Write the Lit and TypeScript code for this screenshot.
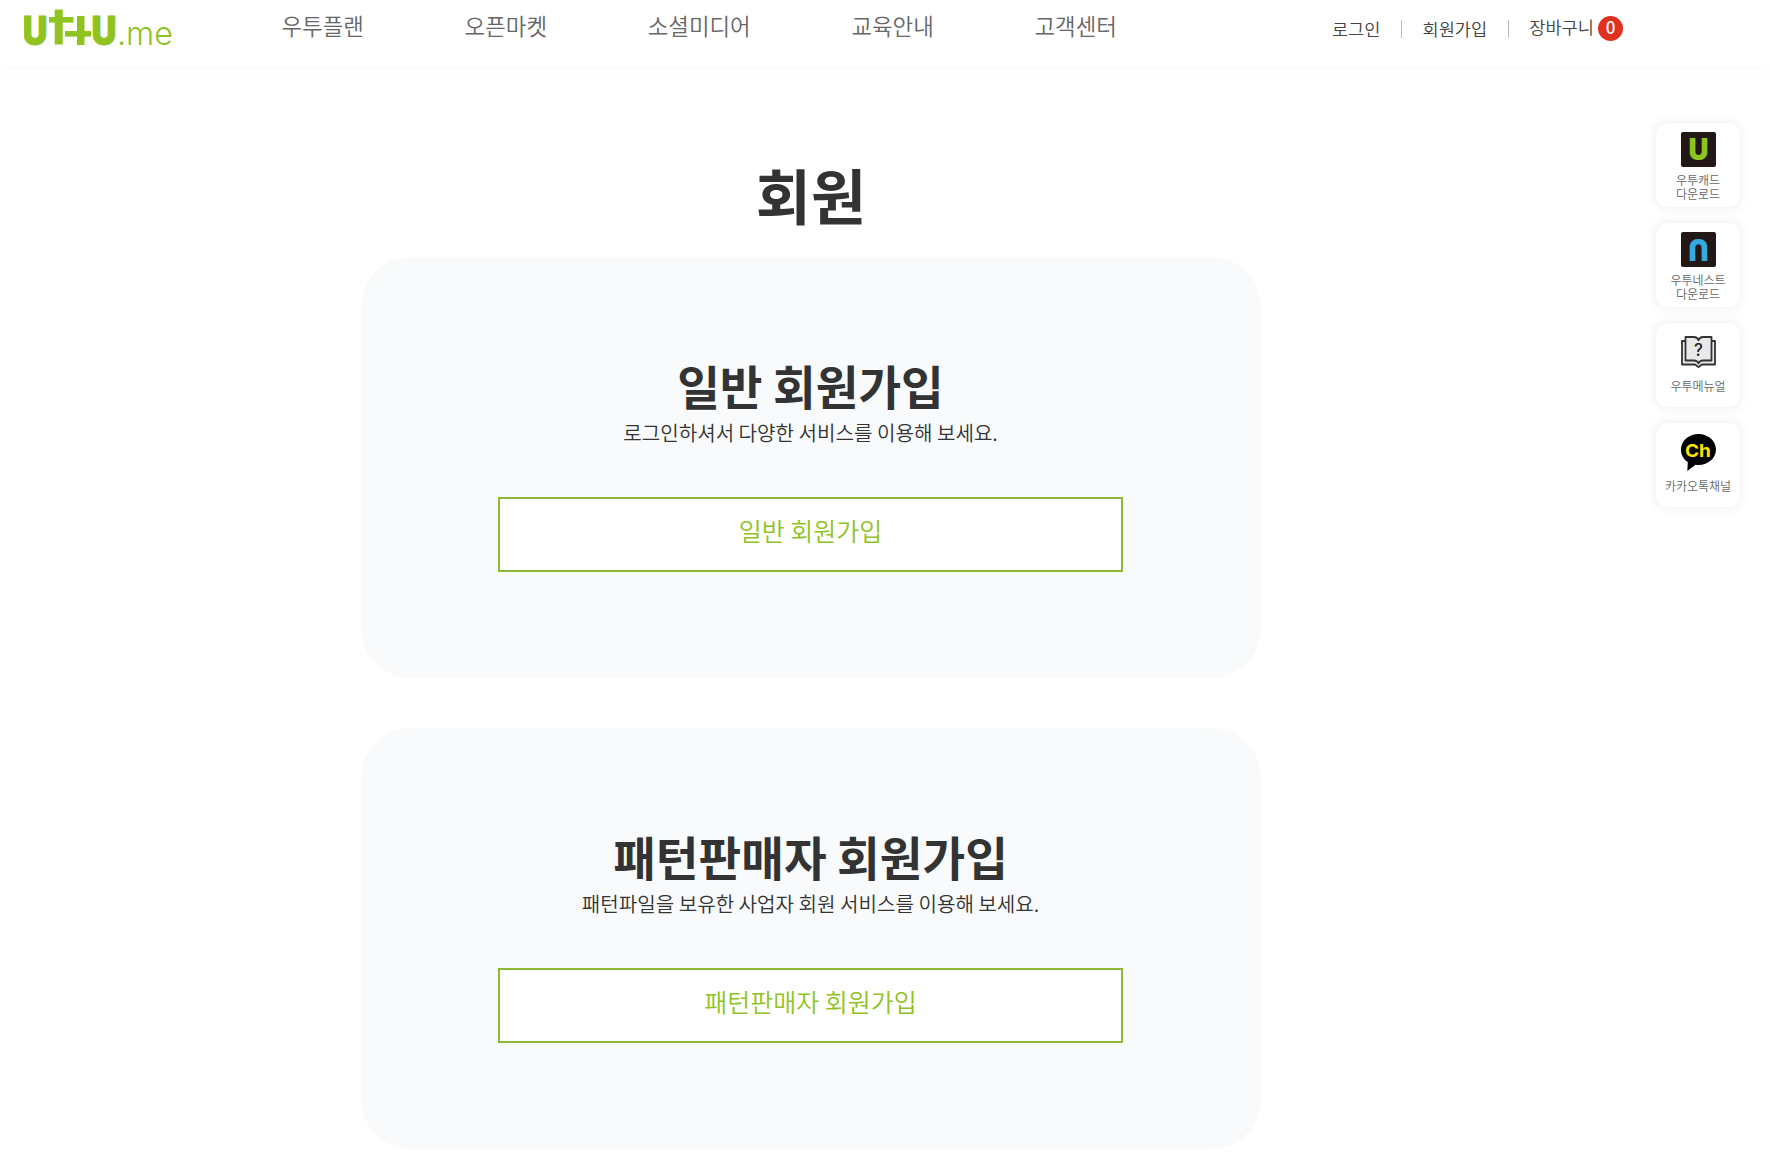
// src/app.ts
import { LitElement, html, css, svg } from 'lit';
import { customElement, property } from 'lit/decorators.js';

const NAV_ITEMS = ['우투플랜', '오픈마켓', '소셜미디어', '교육안내', '고객센터'];

const JOIN_CARDS = [
  {
    title: '일반 회원가입',
    description: '로그인하셔서 다양한 서비스를 이용해 보세요.',
    action: '일반 회원가입',
  },
  {
    title: '패턴판매자 회원가입',
    description: '패턴파일을 보유한 사업자 회원 서비스를 이용해 보세요.',
    action: '패턴판매자 회원가입',
  },
];

const QUICK_LINKS = [
  { icon: 'cad', lines: ['우투캐드', '다운로드'] },
  { icon: 'nest', lines: ['우투네스트', '다운로드'] },
  { icon: 'manual', lines: ['우투메뉴얼'] },
  { icon: 'channel', lines: ['카카오톡채널'] },
];

const ICONS: Record<string, unknown> = {
  cad: svg`
    <rect width="35" height="35" rx="2" fill="#231816" />
    <text class="mark" x="7.5" y="28" font-size="30" textLength="20" lengthAdjust="spacingAndGlyphs"
      fill="#8fc31f">U</text>
  `,
  nest: svg`
    <rect width="35" height="35" rx="2" fill="#231816" />
    <text class="mark" x="7.5" y="28" font-size="30" textLength="20" lengthAdjust="spacingAndGlyphs"
      fill="#36a9e1" transform="rotate(180 17.5 17.5)">U</text>
  `,
  manual: svg`
    <g fill="#e9e9e9" stroke="#333" stroke-width="1.8" stroke-linejoin="round">
      <path d="M4.5 7H1v23.500h12.500c2 0 2.500 2.500 4 2.500s2-2.500 4-2.500H34V7h-3.500" />
      <path d="M4.5 3h8.500c2.200 0 3.800 1.300 4.500 3.300.7-2 2.300-3.300 4.500-3.300h8.500v23.500H22c-2.200 0-3.800 1.200-4.500 3-.7-1.800-2.300-3-4.500-3H4.500z" />
    </g>
    <text class="question" x="17.5" y="21.5" text-anchor="middle">?</text>
  `,
  channel: svg`
    <path d="M17.5 0C7.800 0 0 7 0 15.500c0 5.500 2.600 9.800 6.800 12.500L6.300 37l8.200-6.300c1 .2 2 .3 3 .3C27.200 31 35 24 35 15.500S27.200 0 17.500 0z" />
    <text class="channel" x="17" y="22.5" text-anchor="middle" textLength="26"
      lengthAdjust="spacingAndGlyphs">Ch</text>
  `,
};

@customElement('site-header')
class SiteHeader extends LitElement {
  static styles = css`
    :host {
      display: block;
      height: 66px;
      background: #fff;
      box-shadow: 0 0 20px 10px rgba(0, 0, 0, 0.015);
    }
    .bar {
      display: flex;
      box-sizing: border-box;
      width: 1623px;
      height: 56px;
      padding-left: 24px;
    }
    .logo {
      display: block;
      width: 150px;
      height: 56px;
      margin-right: 107.5px;
      fill: #8fc31f;
    }
    .logo .letter {
      font: 900 40px Inter, sans-serif;
      stroke: #8fc31f;
      stroke-width: 0.8px;
    }
    .logo .suffix {
      font: 300 33px Inter, sans-serif;
    }
    nav {
      display: flex;
      gap: 100.7px;
      font-size: 22.4px;
      line-height: 51px;
      color: #666;
    }
    .account {
      display: flex;
      align-items: center;
      height: 57px;
      margin-left: auto;
      font-size: 17.6px;
      line-height: 25px;
      color: #444;
    }
    .divider {
      width: 1px;
      height: 18px;
      margin: 0 20.5px;
      background: #bbb;
    }
    .cart {
      display: flex;
      align-items: center;
      gap: 4px;
    }
    .cart span {
      margin-top: -4px;
    }
    .badge {
      width: 25px;
      height: 25px;
      border-radius: 50%;
      background: #e0301e;
      color: #fff;
      font: 500 17px/21px 'Noto Sans CJK KR', sans-serif;
      text-align: center;
    }
  `;

  @property({ type: Number })
  cartCount = 0;

  render() {
    return html`
      <div class="bar">
        <svg class="logo" viewBox="24 0 150 56">
          <text class="letter" x="22.5" y="44.5" textLength="25" lengthAdjust="spacingAndGlyphs">U</text>
          <rect x="54.7" y="9.5" width="8" height="35" />
          <rect x="49" y="17" width="24.5" height="5.6" />
          <rect x="77" y="16" width="7.5" height="29" />
          <rect x="65" y="31" width="26" height="5.6" />
          <text class="letter" x="91.5" y="44.5" textLength="25" lengthAdjust="spacingAndGlyphs">U</text>
          <text class="suffix" x="117" y="44.5" textLength="56" lengthAdjust="spacingAndGlyphs">.me</text>
        </svg>
        <nav>${NAV_ITEMS.map(item => html`<span>${item}</span>`)}</nav>
        <div class="account">
          <span>로그인</span>
          <i class="divider"></i>
          <span>회원가입</span>
          <i class="divider"></i>
          <div class="cart">
            <span>장바구니</span>
            <div class="badge">${this.cartCount}</div>
          </div>
        </div>
      </div>
    `;
  }
}

@customElement('join-card')
class JoinCard extends LitElement {
  static styles = css`
    :host {
      display: flex;
      flex-direction: column;
      align-items: center;
      box-sizing: border-box;
      width: 900px;
      height: 421px;
      padding-top: 95px;
      border-radius: 50px;
      background: #f8fafb;
      color: #333;
    }
    h2 {
      margin: 0 1px 1px 0;
      font-size: 46.4px;
      font-weight: 700;
      line-height: 66px;
    }
    p {
      margin: 0 1px 50px 0;
      font-size: 20.1px;
      line-height: 28px;
    }
    button {
      width: 625px;
      height: 75px;
      margin-right: 1px;
      padding: 0 0 10px;
      border: 2px solid #8fb935;
      background: #fff;
      color: #8fc31f;
      font: 350 25px/36px 'Noto Sans CJK KR', sans-serif;
    }
  `;

  @property()
  heading = '';

  @property()
  description = '';

  @property()
  action = '';

  render() {
    return html`
      <h2>${this.heading}</h2>
      <p>${this.description}</p>
      <button>${this.action}</button>
    `;
  }
}

@customElement('quick-menu')
class QuickMenu extends LitElement {
  static styles = css`
    :host {
      display: flex;
      flex-direction: column;
      gap: 16px;
    }
    .item {
      display: flex;
      flex-direction: column;
      align-items: center;
      box-sizing: border-box;
      width: 84px;
      height: 84px;
      padding-top: 8.5px;
      border-radius: 12px;
      background: #fff;
      box-shadow: 0 0 10px 3px rgba(0, 0, 0, 0.05);
      font-size: 12px;
      line-height: 14px;
      color: #666;
      text-align: center;
      white-space: nowrap;
    }
    .item.single {
      padding-top: 11px;
    }
    svg {
      flex: none;
      width: 35px;
      height: 37px;
      margin-bottom: 4.5px;
    }
    .single svg {
      margin-bottom: 8px;
    }
    .mark {
      font-family: Inter, sans-serif;
      font-weight: 900;
    }
    .question {
      font: 500 17px Inter, sans-serif;
      fill: #222;
    }
    .channel {
      font: 700 18px Inter, sans-serif;
      fill: #fae100;
    }
  `;

  render() {
    return html`
      ${QUICK_LINKS.map(link => html`
        <div class="item ${link.lines.length === 1 ? 'single' : ''}">
          <svg viewBox="0 0 35 37">${ICONS[link.icon]}</svg>
          ${link.lines.map(line => html`<span>${line}</span>`)}
        </div>
      `)}
    `;
  }
}

@customElement('app-root')
class AppRoot extends LitElement {
  static styles = css`
    :host {
      display: block;
      position: relative;
      height: 1163px;
      overflow: hidden;
      background: #fff;
      font-family: 'Noto Sans CJK KR', sans-serif;
      font-weight: 350;
    }
    main {
      display: flex;
      flex-direction: column;
      align-items: center;
      width: 1622px;
      padding-top: 85px;
    }
    h1 {
      margin: 0 0 20px;
      font-size: 60px;
      font-weight: 700;
      line-height: 86px;
      color: #333;
    }
    .cards {
      display: flex;
      flex-direction: column;
      gap: 50px;
    }
    /* floats over the page at the right edge */
    quick-menu {
      position: absolute;
      top: 123px;
      right: 30px;
    }
  `;

  render() {
    return html`
      <site-header></site-header>
      <main>
        <h1>회원</h1>
        <div class="cards">
          ${JOIN_CARDS.map(card => html`
            <join-card
              .heading=${card.title}
              .description=${card.description}
              .action=${card.action}
            ></join-card>
          `)}
        </div>
      </main>
      <quick-menu></quick-menu>
    `;
  }
}
